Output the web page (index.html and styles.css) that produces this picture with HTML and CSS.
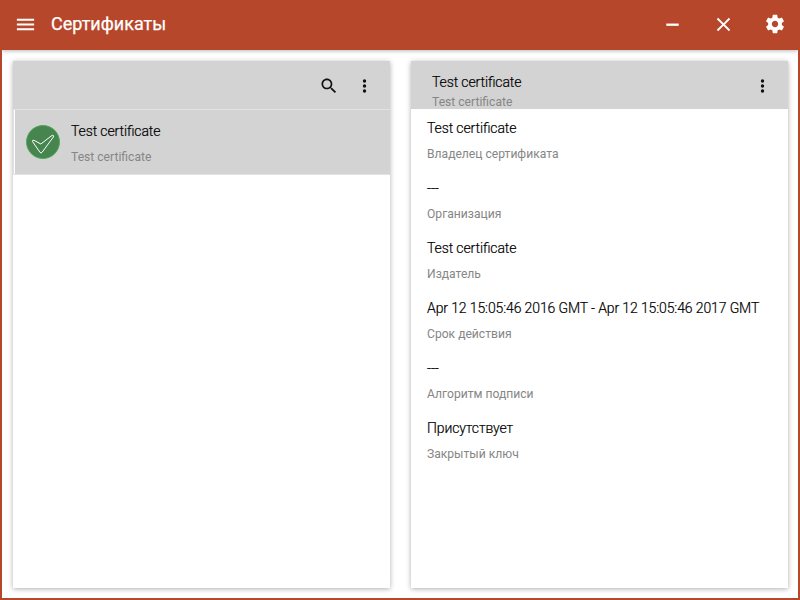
FILE: index.html
```html
<!DOCTYPE html>
<html lang="ru">
<head>
<meta charset="utf-8">
<title>Сертификаты</title>
<link rel="stylesheet" href="styles.css">
</head>
<body>
<div class="window">
  <header class="topbar">
    <svg class="icon menu" viewBox="0 0 24 24"><path d="M3 18h18v-2H3v2zm0-5h18v-2H3v2zm0-7v2h18V6H3z"/></svg>
    <h1 class="title">Сертификаты</h1>
    <svg class="icon minimize" viewBox="0 0 24 24"><path d="M5.500 11h13v2.400h-13z"/></svg>
    <svg class="icon close" viewBox="0 0 24 24"><path d="M19 6.410L17.590 5 12 10.590 6.410 5 5 6.410 10.590 12 5 17.590 6.410 19 12 13.410 17.590 19 19 17.590 13.410 12z"/></svg>
    <svg class="icon settings" viewBox="0 0 24 24"><path d="M19.43 12.98c.04-.32.07-.64.07-.98s-.03-.66-.07-.98l2.11-1.65c.19-.15.24-.42.12-.64l-2-3.46c-.12-.22-.39-.3-.61-.22l-2.49 1c-.52-.4-1.08-.73-1.69-.98l-.38-2.65C14.46 2.18 14.25 2 14 2h-4c-.25 0-.46.18-.49.42l-.38 2.65c-.61.25-1.17.59-1.69.98l-2.49-1c-.23-.09-.49 0-.61.22l-2 3.46c-.13.22-.07.49.12.64l2.11 1.65c-.04.32-.07.65-.07.98s.03.66.07.98l-2.11 1.65c-.19.15-.24.42-.12.64l2 3.46c.12.22.39.3.61.22l2.49-1c.52.4 1.08.73 1.69.98l.38 2.65c.03.24.24.42.49.42h4c.25 0 .46-.18.49-.42l.38-2.65c.61-.25 1.17-.59 1.69-.98l2.49 1c.23.09.49 0 .61-.22l2-3.46c.12-.22.07-.49-.12-.64l-2.11-1.65zM12 15.5c-1.93 0-3.500-1.570-3.500-3.500s1.570-3.500 3.500-3.500 3.500 1.570 3.500 3.500-1.570 3.500-3.500 3.500z"/></svg>
  </header>
  <main class="panels">
    <section class="panel">
      <div class="panel-head tools">
        <svg class="icon search" viewBox="0 0 24 24"><path d="M15.500 14h-.79l-.28-.27C15.410 12.590 16 11.110 16 9.500 16 5.910 13.090 3 9.500 3S3 5.910 3 9.500 5.910 16 9.500 16c1.610 0 3.090-.59 4.230-1.570l.27.28v.79l5 4.990L20.490 19l-4.990-5zm-6 0C7.010 14 5 11.990 5 9.500S7.010 5 9.500 5 14 7.010 14 9.500 11.990 14 9.500 14z"/></svg>
        <svg class="icon more" viewBox="0 0 20 20"><circle cx="10.500" cy="5" r="1.700"/><circle cx="10.500" cy="10" r="1.700"/><circle cx="10.500" cy="15" r="1.700"/></svg>
      </div>
      <div class="item">
        <svg class="status" viewBox="0 0 34 34"><circle class="disc" cx="17" cy="17" r="16.500"/><path class="tick" d="M6.500 16.500Q6.200 14.800 8 15.300L14.800 19L26.200 10.300Q28 10 27.400 12L16 27.400Q15 28.600 14 27.400Z"/></svg>
        <div class="item-text">
          <div class="value">Test certificate</div>
          <div class="label">Test certificate</div>
        </div>
      </div>
    </section>
    <section class="panel">
      <div class="panel-head">
        <div class="head-text">
          <div class="value">Test certificate</div>
          <div class="label">Test certificate</div>
        </div>
        <svg class="icon more" viewBox="0 0 20 20"><circle cx="10.500" cy="5" r="1.700"/><circle cx="10.500" cy="10" r="1.700"/><circle cx="10.500" cy="15" r="1.700"/></svg>
      </div>
      <div class="details">
        <div class="field"><div class="value">Test certificate</div><div class="label">Владелец сертификата</div></div>
        <div class="field"><div class="value">---</div><div class="label">Организация</div></div>
        <div class="field"><div class="value">Test certificate</div><div class="label">Издатель</div></div>
        <div class="field"><div class="value">Apr 12 15:05:46 2016 GMT - Apr 12 15:05:46 2017 GMT</div><div class="label">Срок действия</div></div>
        <div class="field"><div class="value">---</div><div class="label">Алгоритм подписи</div></div>
        <div class="field"><div class="value">Присутствует</div><div class="label">Закрытый ключ</div></div>
      </div>
    </section>
  </main>
</div>
</body>
</html>
```

FILE: styles.css
```css
* { box-sizing: border-box; }
body { margin: 0; font-family: Roboto, "Liberation Sans", sans-serif; }
.window {
  width: 800px;
  height: 600px;
  display: flex;
  flex-direction: column;
  border: 2px solid #b7472a;
  border-top: 0;
  background: #fff;
  overflow: hidden;
}
.topbar {
  flex: none;
  height: 50px;
  display: flex;
  align-items: center;
  padding: 0 12px 2px 12px;
  background: #b7472a;
  color: #fff;
  box-shadow: 0 1px 4px rgba(0, 0, 0, .28);
}
.icon { display: block; flex: none; fill: currentColor; }
.menu { width: 23px; height: 23px; }
.title { margin: 0 auto 0 14px; font-size: 18px; font-weight: 400; line-height: 24px; -webkit-text-stroke: .25px #fff; }
.minimize, .close { width: 23px; height: 23px; }
.minimize { margin-right: 28px; }
.close { margin-right: 29px; }
.settings { width: 22px; height: 22px; }
.panels { flex: 1; display: flex; gap: 21px; padding: 11px 10px 10px 11px; }
.panel {
  width: 377px;
  background: #fff;
  box-shadow: 0 1px 5px rgba(0, 0, 0, .32);
}
.panel-head {
  height: 48px;
  display: flex;
  align-items: center;
  justify-content: space-between;
  padding: 2px 16px 0 21px;
  background: #d3d3d3;
  color: #111;
  overflow: hidden;
}
.tools { justify-content: flex-end; gap: 15px; }
.search { width: 20px; height: 20px; }
.more { width: 20px; height: 20px; }
.value {
  font-size: 14px;
  font-weight: 300;
  letter-spacing: -.118px;
  font-feature-settings: "liga" 1;
  line-height: 20px;
  color: #000;
  -webkit-text-stroke: .2px #000;
  white-space: nowrap;
}
.label { font-size: 12.120px; line-height: 16px; color: #868686; white-space: nowrap; }
.head-text { align-self: flex-start; padding-top: 9px; }
.head-text .label { margin-top: 2px; }
.item {
  height: 66px;
  display: flex;
  align-items: center;
  border: 1px solid #e2e2e2;
  border-right: 0;
  background: #d3d3d3;
  box-shadow: inset 1px 0 #fff;
  padding-left: 12px;
}
.status { width: 34px; height: 34px; margin-right: 11px; }
.disc { fill: #47854f; stroke: #4fa85d; stroke-width: 1; }
.tick { fill: none; stroke: #fff; stroke-width: 1; }
.item-text { padding-top: 2px; }
.item-text .label { margin-top: 8px; }
.details { padding: 9px 16px; }
.field { height: 60px; }
.field .label { margin-top: 8px; }
```
